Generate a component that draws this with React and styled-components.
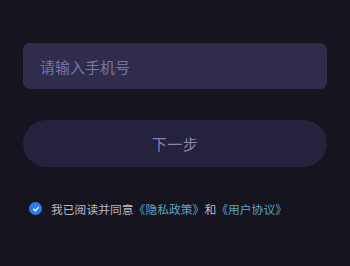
import styled, { createGlobalStyle } from 'styled-components';

const GlobalStyle = createGlobalStyle`
  html, body {
    margin: 0;
    padding: 0;
    background: #15141f;
  }
  body {
    font-family: "Noto Sans CJK SC", "Noto Sans", sans-serif;
  }
`;

const Page = styled.div`
  width: 350px;
  height: 266px;
  background: #15141f;
  padding: 43px 23px 0;
  box-sizing: border-box;
  display: flex;
  flex-direction: column;
`;

const PhoneInput = styled.input`
  height: 46px;
  border: none;
  outline: none;
  border-radius: 7px;
  background: #302d4c;
  padding: 0 17px;
  font-family: inherit;
  font-size: 15px;
  color: #e0dcf5;
  box-sizing: border-box;

  &::placeholder {
    color: #7a74a5;
  }
`;

const NextButton = styled.button`
  margin-top: 31px;
  height: 47px;
  border: none;
  border-radius: 24px;
  background: #24223c;
  color: #8a84b2;
  font-family: inherit;
  font-size: 15px;
  letter-spacing: 0.5px;
`;

const Agreement = styled.label`
  margin-top: 33px;
  padding-left: 6px;
  display: flex;
  align-items: center;
  gap: 9px;
  font-size: 11.8px;
  color: #b9b6c6;
`;

const Check = styled.span`
  width: 13px;
  height: 13px;
  border-radius: 50%;
  background: #2f7bf0;
  display: flex;
  align-items: center;
  justify-content: center;
  flex-shrink: 0;
`;

const Link = styled.span`
  color: #5aa6c8;
`;

export default function App() {
  return (
    <>
      <GlobalStyle />
      <Page>
        <PhoneInput placeholder="请输入手机号" />
        <NextButton>下一步</NextButton>
        <Agreement>
          <Check>
            <svg width="8" height="8" viewBox="0 0 10 10">
              <path d="M2 5.2 L4.2 7.2 L8 3" fill="none" stroke="#fff" strokeWidth="1.6" strokeLinecap="round" strokeLinejoin="round" />
            </svg>
          </Check>
          <span>
            我已阅读并同意<Link>《隐私政策》</Link>和<Link>《用户协议》</Link>
          </span>
        </Agreement>
      </Page>
    </>
  );
}
